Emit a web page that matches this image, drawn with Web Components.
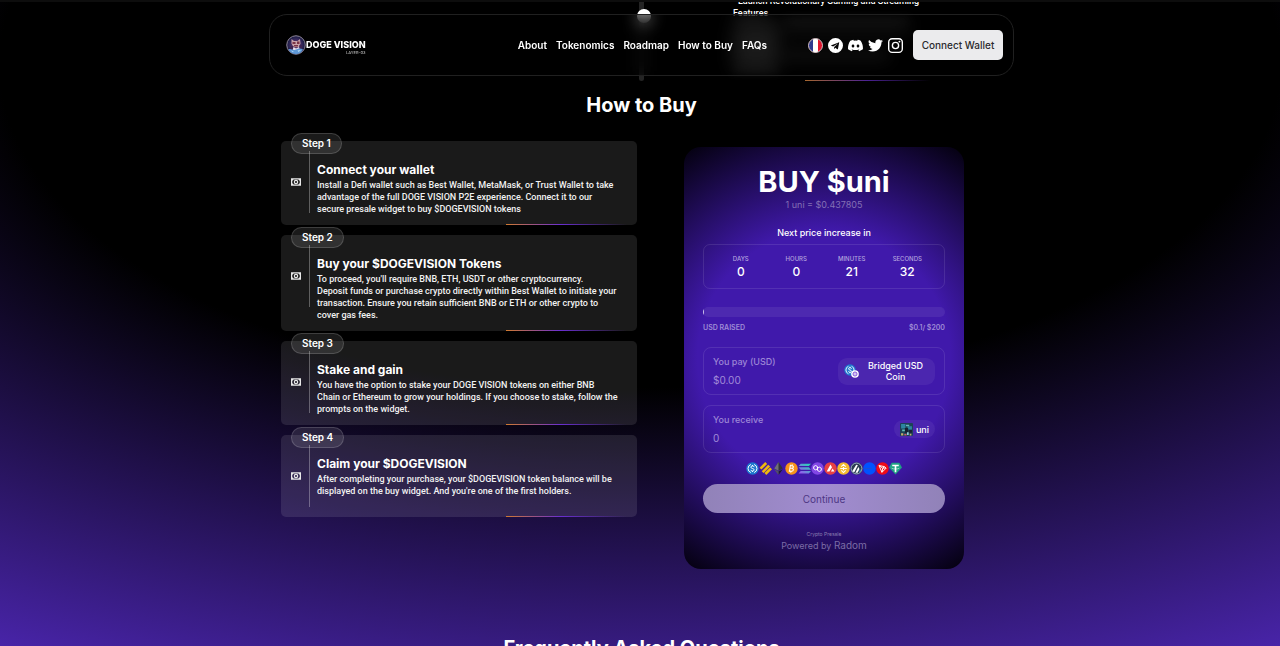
<!DOCTYPE html>
<html lang="en">
<head>
<meta charset="utf-8">
<meta name="viewport" content="width=device-width, initial-scale=1">
<title>Doge Vision – How to Buy</title>
<style>
  html { height: 100%; overflow: hidden; background: #000; }
  body {
    margin: 0; min-height: 100%;
    color: #fff;
    font-family: "Inter", "Liberation Sans", sans-serif;
    font-size: 9px; line-height: 12px;
    background: radial-gradient(125% 125% at 50% 10%, #000 40%, #63e 100%) fixed;
  }
</style>
</head>
<body>
<doge-page></doge-page>

<script>
class Base extends HTMLElement {
  connectedCallback() {
    if (this.shadowRoot) return;
    const t = document.createElement('template');
    t.innerHTML = this.render();
    this.attachShadow({ mode: 'open' }).append(t.content.cloneNode(true));
  }
}
const define = (name, render) =>
  customElements.define(name, class extends Base { render() { return render(this); } });

/* ---------- icons ---------- */
const ICONS = {
  france: ['24', `<clipPath id="c"><circle cx="12" cy="12" r="11"/></clipPath><g clip-path="url(#c)"><path fill="#2f3a8f" d="M0 0h8v24H0z"/><path fill="#fff" d="M8 0h8v24H8z"/><path fill="#e0162f" d="M16 0h8v24h-8z"/></g><circle cx="12" cy="12" r="11.2" fill="none" stroke="#f2d9df" stroke-width="1.4"/>`],
  telegram: ['24', `<path fill="#fff" d="M12 0a12 12 0 1 0 0 24 12 12 0 0 0 0-24zm5.9 7.3-2 10.1c-.1.7-.5.8-1.100.5l-3-2.200-1.500 1.400c-.2.2-.3.3-.6.3l.2-3.100 5.600-5.100c.2-.2 0-.3-.4-.1l-6.900 4.400-3-1c-.6-.2-.6-.6.2-1l11.600-4.500c.5-.2 1 .1.900.3z"/>`],
  discord: ['24', `<path fill="#fff" d="M20.300 4.400a19.800 19.800 0 0 0-4.900-1.500l-.6 1.300a18 18 0 0 0-5.500 0l-.7-1.300c-1.700.3-3.300.8-4.900 1.500C.5 9-.3 13.600.1 18.100a20 20 0 0 0 6 3l1.300-2-2-1 .5-.3a14 14 0 0 0 12.100 0l.5.3-1.900 1 1.200 2a20 20 0 0 0 6-3c.5-5.200-.8-9.700-3.500-13.700zM8 15.300c-1.200 0-2.200-1.100-2.200-2.400S6.800 10.500 8 10.500s2.200 1.100 2.200 2.400-1 2.400-2.200 2.400zm8 0c-1.200 0-2.200-1.100-2.200-2.400s1-2.400 2.200-2.400 2.200 1.100 2.200 2.400-1 2.400-2.200 2.400z"/>`],
  twitter: ['24', `<path fill="#fff" d="M24 4.600a10 10 0 0 1-2.800.8 5 5 0 0 0 2.200-2.700 10 10 0 0 1-3.100 1.200 4.900 4.900 0 0 0-8.400 4.500A14 14 0 0 1 1.700 3.200a4.900 4.900 0 0 0 1.500 6.500 5 5 0 0 1-2.200-.6v.1a4.900 4.900 0 0 0 3.900 4.800 5 5 0 0 1-2.200.1 4.900 4.900 0 0 0 4.600 3.400A9.900 9.900 0 0 1 0 19.500a14 14 0 0 0 7.500 2.200c9.100 0 14-7.500 14-14v-.6A10 10 0 0 0 24 4.600z"/>`],
  instagram: ['24', `<g fill="none" stroke="#fff" stroke-width="2.200"><rect x="1.100" y="1.100" width="21.800" height="21.800" rx="5.500"/><circle cx="12" cy="12" r="5"/></g><circle cx="18.300" cy="5.700" r="1.500" fill="#fff"/>`],
  money: ['24', `<path fill="#e8e8e8" fill-rule="evenodd" d="M0 3h24v18H0zm6 3a4 4 0 0 1-3 3v6a4 4 0 0 1 3 3h12a4 4 0 0 1 3-3V9a4 4 0 0 1-3-3z"/><circle cx="12" cy="12" r="4" fill="none" stroke="#e8e8e8" stroke-width="2.800"/>`],
  usdc: ['24', `<circle cx="12" cy="12" r="11.500" fill="#1d78cf"/><g fill="none" stroke="#fff" stroke-width="1.800"><path d="M9 4.500a8 8 0 0 0 0 15M15 4.500a8 8 0 0 1 0 15M15 9.500c-.3-3-6-3-6 0 0 3.500 6 1.500 6 5 0 3-6 3-6 0M12 5.500v2M12 16.500v2"/></g>`],
  busd: ['24', `<g fill="#f0b90b"><path d="m11.500 0 3.500 3.500L4.500 14 1 10.500z"/><path d="m17 5 3.500 3.500L8.500 20.500 5 17z"/><path d="m20.500 10 3.500 3.500L13.500 24 10 20.500z"/></g>`],
  eth: ['24', `<path fill="#33333b" d="m12 0 8 12-8 4-8-4z"/><path fill="#6f6f7a" d="m12 0v16l-8-4z"/><path fill="#1f1f26" d="m12 24 8-10.500-8 4z"/><path fill="#55555f" d="m12 24v-6.500l-8-4z"/>`],
  btc: ['24', `<circle cx="12" cy="12" r="11.500" fill="#f7931a"/><path fill="none" stroke="#fff" stroke-width="2" d="m10 5-2 13.500M9 6.500l4 .5c4 .5 3 5-1 4.500l-3-.3 3.500.3c4.500.8 3.500 6-1 5.500L7 16.500M13.500 4.500 13 7M11 17l-.5 2.500"/>`],
  sol: ['24', `<linearGradient id="s" x1="0" y1="1" x2="1" y2="0"><stop stop-color="#a44cf5"/><stop offset="1" stop-color="#19e8ae"/></linearGradient><path fill="url(#s)" d="M5 3h19l-4 4.500H1zM1 9.800h19l4 4.500H5zM5 16.500h19L20 21H1z"/>`],
  matic: ['24', `<circle cx="12" cy="12" r="11.500" fill="#8247e5"/><g fill="none" stroke="#fff" stroke-width="1.800"><path d="m8.500 6.500 3.500 2v4l-3.500 2-3.500-2v-4zM15.500 9.500l3.500 2v4l-3.500 2-3.500-2v-4z"/></g>`],
  avax: ['24', `<circle cx="12" cy="12" r="11.500" fill="#e84142"/><path fill="#fff" d="m12 4.500 2.800 5L10 17.500H5zM16 12l3.300 5.500h-6.500z"/>`],
  bnb: ['24', `<circle cx="12" cy="12" r="11.500" fill="#f3ba2f"/><path fill="none" stroke="#fff" stroke-width="2" d="m8 8.500 4-4 4 4M8 15.500l4 4 4-4M6 12h12M12 9v6"/>`],
  arb: ['24', `<circle cx="12" cy="12" r="11.500" fill="#2b3d52"/><circle cx="12" cy="12" r="10" fill="none" stroke="#b5cbe0" stroke-width="1.500"/><path fill="#fff" d="m11.500 5 3 1L8 19l-4-2zM15.500 9l2 4-3.500 7h-4z"/><path fill="#28a0f0" d="m18.500 13 1.500 3-3 3z"/>`],
  base: ['24', `<circle cx="12" cy="12" r="11.500" fill="#0052ff"/><path d="M2 12h14" stroke="#1a50d8" stroke-width="2"/>`],
  tron: ['24', `<circle cx="12" cy="12" r="11.500" fill="#f00b17"/><path fill="none" stroke="#fff" stroke-width="1.800" stroke-linejoin="round" d="m5.500 6.500 10 2 3 3-7.500 7.500zM5.500 6.500l7 5 6-.5M12.500 11.500 11 19M15.500 8.500l-3 3"/>`],
  usdt: ['24', `<path fill="#1fa284" d="M5 1.500h14l5 8.500L12 23 0 10z"/><path fill="#fff" d="M6 5h12v3h-4.500v11h-3V8H6z"/><path fill="none" stroke="#fff" d="M5 11.500c3 2 11 2 14 0"/>`],
  polygon: ['24', `<circle cx="12" cy="12" r="11.500" fill="#fff"/><circle cx="12" cy="12" r="6" fill="none" stroke="#7c4ad8" stroke-width="3"/><path d="M9 12h6" stroke="#7c4ad8" stroke-width="2"/>`],
  uni: ['24', `<rect width="24" height="24" rx="2" fill="#1c4256"/><path fill="#2d86a0" d="M2 2h8v8H2zM14 6h8v6h-8z"/><path fill="#63bdb7" d="M11 3h6v3h-6zM4 12h7v3H4z"/><path fill="#16202f" d="M9 9h6v9H9zM17 13h5v5h-5z"/><path fill="#c5ae6e" d="M2 19h4v4H2zM18 20h3v3h-3z"/><path fill="#cf6170" d="M8 20h4v3H8z"/><path fill="#98d3e2" d="M13 17h3v5h-3z"/>`],
  mascot: ['40', `<radialGradient id="g"><stop stop-color="#7a4568"/><stop offset=".6" stop-color="#3a2a60"/><stop offset="1" stop-color="#171b3f"/></radialGradient><circle cx="20" cy="20" r="18.500" fill="url(#g)" stroke="#8f8599" stroke-width="2"/><path fill="#c9a2a8" d="m11 8 5 4h7l5-4 1 9-3 7H15l-4-7z"/><path fill="#7a3547" d="M13 14h6v4h-6zM22 13h5v5h-5zM16 20h8v3h-8z"/><path fill="#3e2450" d="M9 22h6v6H9zM27 20h5v7h-5z"/><path fill="#e8e2ee" d="m15 24 5 3 6-3 2 7H13z"/><path fill="#5e98d6" d="M5 29c5-3 9 3 15 0s10-2 14 0c-3 6-8 9-14 9S8 35 5 29z"/><path fill="#b8ddf5" d="m10 31 6 2-3 1zM23 31l7-1-5 4z"/>`]
};
define('x-icon', el => {
  const [box, body] = ICONS[el.getAttribute('name')];
  return `<style>:host{display:block;flex:none;width:var(--size,13px);height:var(--size,13px)}svg{display:block;width:100%;height:100%}</style>
  <svg viewBox="0 0 ${box} ${box}" aria-hidden="true">${body}</svg>`;
});

/* ---------- header ---------- */
define('site-header', () => `<style>
  :host { display: flex; align-items: center; box-sizing: border-box; height: 62px; padding: 0 10px 0 16px;
    border: 1px solid #202020; border-radius: 18px; background: rgba(0,0,0,.4); backdrop-filter: blur(8px); }
  .logo { display: flex; align-items: center; color: #fff; text-decoration: none; --size: 20px; }
  .name { position: relative; font-size: 9px; font-weight: 800; white-space: nowrap; }
  .name small { position: absolute; right: 0; top: 11px; font-size: 4px; line-height: 6px; font-weight: 500; color: #b5b5b5; }
  nav { display: flex; gap: 9px; margin-left: auto; font-size: 10px; font-weight: 600; white-space: nowrap; }
  nav a { color: #fff; text-decoration: none; }
  .social { display: flex; gap: 5px; margin: 0 10px 0 41px; --size: 15px; }
  button { width: 90px; height: 30px; padding: 0; border: 0; border-radius: 5px; background: #ebebed; color: #2a2a2e;
    font: 500 10px/12px "Inter", sans-serif; white-space: nowrap; }
</style>
<a class="logo" href="#"><x-icon name="mascot"></x-icon><span class="name">DOGE VISION<small>LAYER-03</small></span></a>
<nav><a href="#about">About</a><a href="#tokenomics">Tokenomics</a><a href="#roadmap">Roadmap</a><a href="#buy">How to Buy</a><a href="#faqs">FAQs</a></nav>
<div class="social">
  <a href="#fr" aria-label="Français"><x-icon name="france"></x-icon></a>
  <a href="#tg" aria-label="Telegram"><x-icon name="telegram"></x-icon></a>
  <a href="#dc" aria-label="Discord"><x-icon name="discord"></x-icon></a>
  <a href="#tw" aria-label="Twitter"><x-icon name="twitter"></x-icon></a>
  <a href="#ig" aria-label="Instagram"><x-icon name="instagram"></x-icon></a>
</div>
<button type="button">Connect Wallet</button>`);

/* ---------- end of the roadmap, scrolled under the header ---------- */
define('roadmap-end', () => `<style>
  :host { display: grid; grid-template-columns: 1fr 5px 1fr; height: 81px; position: relative; overflow: hidden; }
  .track { grid-column: 2; background: #242424; border-radius: 0 0 3px 3px; }
  .dot { position: absolute; left: calc(50% - 5px); top: 9px; width: 14px; height: 14px; border-radius: 50%; background: #fff; }
  .item { position: relative; padding-left: 89px; }
  p { margin: -5px 0 0; width: 200px; text-indent: 5px; font-family: Roboto, sans-serif; font-weight: 500; }
  .chip { width: 46px; height: 48px; margin-top: 4px; background: #2c2c2c; filter: blur(4px); }
  .row { position: absolute; left: 140px; top: 20px; width: 125px; height: 10px; background: #2c2c2c; filter: blur(4px); }
  .row.b { top: 50px; width: 105px; background: #242424; }
  .glow { position: absolute; left: 161px; bottom: 0; width: 125px; height: 1px; background: linear-gradient(90deg, #a5662f, #4b2293 50%, transparent); }
</style>
<div class="track"></div><div class="dot"></div>
<div class="item"><p>Launch Revolutionary Gaming and Streaming Features</p><div class="chip"></div><div class="row"></div><div class="row b"></div><div class="glow"></div></div>`);

/* ---------- step card ---------- */
define('step-card', el => `<style>
  :host { display: flex; position: relative; box-sizing: border-box; min-height: 82px; padding: 0 10px; border-radius: 5px; background: rgba(255,255,255,.1); }
  .rail { display: flex; align-items: center; box-sizing: border-box; width: 19px; height: 62px; margin: 10px 7px 0 0; border-right: 1px solid rgba(255,255,255,.3); --size: 10px; }
  .badge { position: absolute; left: 10px; top: -8px; box-sizing: border-box; height: 21px; padding: 0 10px; border: 1px solid rgba(255,255,255,.16);
    border-radius: 11px; background: rgba(255,255,255,.1); font-size: 10px; line-height: 19px; font-weight: 600; }
  .text { flex: 1; padding: 21px 0 10px; }
  h3 { margin: 0 0 2px; font-size: 12px; line-height: 15px; font-weight: 700; }
  p { margin: 0; color: #f2f2f2; font-family: Roboto, sans-serif; font-weight: 500; }
  .glow { position: absolute; right: 10px; bottom: 0; width: 34%; height: 1px; background: linear-gradient(90deg, #d07a30, #6a2fd0 45%, transparent); }
</style>
<span class="badge">${el.getAttribute('step')}</span>
<div class="rail"><x-icon name="money"></x-icon></div>
<div class="text"><h3>${el.getAttribute('heading')}</h3><p><slot></slot></p></div>
<div class="glow"></div>`);

/* ---------- presale widget ---------- */
define('time-unit', el => `<style>
  :host { display: block; text-align: center; font-size: 12px; line-height: 16px; font-weight: 500; }
  small { display: block; font-size: 6px; line-height: 10px; color: #b3a3de; }
</style><small>${el.getAttribute('label')}</small><slot></slot>`);

define('amount-field', el => `<style>
  :host { display: flex; align-items: center; justify-content: space-between; box-sizing: border-box; height: 48px; padding: 0 9px; border: 1px solid rgba(255,255,255,.1); border-radius: 8px; }
  label { display: block; font-size: 9px; line-height: 14px; font-weight: 500; color: #9c86d6; white-space: nowrap; }
  input { display: block; width: 90px; height: 16px; margin-top: 3px; padding: 0; border: 0; outline: 0; background: none; color: #a08bd8; font: 10px/16px "Inter", sans-serif; }
</style>
<div><label for="amount">${el.getAttribute('label')}</label><input id="amount" value="${el.getAttribute('value')}" inputmode="decimal"></div><slot></slot>`);

define('coin-button', () => `<style>
  :host { display: block; }
  button { display: flex; align-items: center; gap: 3px; padding: 1px 6px; min-height: 18px; border: 0; border-radius: 9px; background: rgba(255,255,255,.06); color: #fff; font: 500 9px/11px "Inter", sans-serif; }
  :host([wide]) button { width: 97px; height: 27px; }
  .label { flex: 1; text-align: center; }
</style><button type="button"><slot name="icon"></slot><span class="label"><slot></slot></span></button>`);

define('coin-pair', () => `<style>
  :host { display: block; position: relative; width: 15px; height: 14px; --size: 12px; }
  .net { position: absolute; left: 7px; top: 6px; --size: 8px; }
</style><x-icon name="usdc"></x-icon><x-icon class="net" name="polygon"></x-icon>`);

define('presale-widget', () => `<style>
  :host { display: flex; flex-direction: column; box-sizing: border-box; padding: 17px 19px 16px; border-radius: 17px; text-align: center;
    background: radial-gradient(circle, #4019ab 50%, #03000c 100%); }
  h2 { margin: 0; font-size: 29px; line-height: 36px; font-weight: 700; }
  .rate { margin: 0; font-size: 9px; line-height: 10px; color: #8370b5; }
  .next { margin: 17px 0 5px; font-size: 9px; line-height: 12px; font-weight: 500; }
  .timer { display: grid; grid-template-columns: repeat(4, 1fr); box-sizing: border-box; height: 45px; padding: 9px 9px 0; border: 1px solid rgba(255,255,255,.1); border-radius: 7px; }
  .bar { height: 10px; margin-top: 18px; border-radius: 5px; background: rgba(255,255,255,.07); overflow: hidden; }
  .bar i { display: block; width: 1px; height: 100%; background: #cfc5ec; }
  .raised { display: flex; justify-content: space-between; margin: 6px 0 14px; font-size: 7px; line-height: 10px; font-weight: 600; color: #9f8bd6; }
  amount-field { margin-bottom: 10px; text-align: left; }
  .coins { display: flex; justify-content: center; margin: -1px 0 9px; }
  .go { height: 29px; padding: 0; border: 0; border-radius: 15px; background: linear-gradient(90deg, #9182b8, #a18cd0 50%, #9182b8); color: #4d3684; font: 10px/12px "Inter", sans-serif; }
  .tag { margin: 17px 0 0; font-size: 5px; line-height: 8px; color: #8b7db0; }
  .by { margin: 0; font-size: 9px; line-height: 14px; color: #7b6ca6; }
  .by a { color: inherit; text-decoration: none; font-size: 10px; }
</style>
<h2>BUY $uni</h2>
<p class="rate">1 uni = $0.437805</p>
<p class="next">Next price increase in</p>
<div class="timer"><time-unit label="DAYS">0</time-unit><time-unit label="HOURS">0</time-unit><time-unit label="MINUTES">21</time-unit><time-unit label="SECONDS">32</time-unit></div>
<div class="bar"><i></i></div>
<div class="raised"><span>USD RAISED</span><span>$0.1/ $200</span></div>
<amount-field label="You pay (USD)" value="$0.00"><coin-button wide><coin-pair slot="icon"></coin-pair>Bridged USD Coin</coin-button></amount-field>
<amount-field label="You receive" value="0"><coin-button><x-icon slot="icon" name="uni"></x-icon>uni</coin-button></amount-field>
<div class="coins">${['usdc','busd','eth','btc','sol','matic','avax','bnb','arb','base','tron','usdt'].map(n => `<x-icon name="${n}"></x-icon>`).join('')}</div>
<button class="go" type="button">Continue</button>
<p class="tag">Crypto Presale</p>
<p class="by">Powered by <a href="#radom">Radom</a></p>`);

/* ---------- page ---------- */
define('doge-page', () => `<style>
  :host { display: block; padding-left: 3px; }
  .wrap { max-width: 745px; margin: 0 auto; }
  .top { position: fixed; z-index: 2; left: 3px; right: 0; top: 14px; }
  .edge { position: fixed; z-index: 3; inset: 0 0 auto; height: 2px; background: #0d0d0d; }
  h2 { margin: 0; text-align: center; font-size: 20px; line-height: 24px; font-weight: 700; }
  .how { margin-top: 12px; }
  .cols { display: grid; grid-template-columns: 1fr 1fr; gap: 9px; align-items: start; padding: 24px 12px 0; }
  .steps { display: grid; gap: 10px; }
  presale-widget { width: 280px; margin: 6px auto 0; }
  .faq { margin-top: 67px; }
</style>
<div class="edge"></div>
<div class="top"><site-header class="wrap"></site-header></div>
<roadmap-end class="wrap"></roadmap-end>
<main class="wrap">
  <h2 class="how" id="buy">How to Buy</h2>
  <div class="cols">
    <div class="steps">
      <step-card step="Step 1" heading="Connect your wallet">Install a Defi wallet such as Best Wallet, MetaMask, or Trust Wallet to take<br>advantage of the full DOGE VISION P2E experience. Connect it to our<br>secure presale widget to buy $DOGEVISION tokens</step-card>
      <step-card step="Step 2" heading="Buy your $DOGEVISION Tokens">To proceed, you'll require BNB, ETH, USDT or other cryptocurrency.<br>Deposit funds or purchase crypto directly within Best Wallet to initiate your<br>transaction. Ensure you retain sufficient BNB or ETH or other crypto to<br>cover gas fees.</step-card>
      <step-card step="Step 3" heading="Stake and gain">You have the option to stake your DOGE VISION tokens on either BNB<br>Chain or Ethereum to grow your holdings. If you choose to stake, follow the<br>prompts on the widget.</step-card>
      <step-card step="Step 4" heading="Claim your $DOGEVISION">After completing your purchase, your $DOGEVISION token balance will be<br>displayed on the buy widget. And you're one of the first holders.</step-card>
    </div>
    <presale-widget></presale-widget>
  </div>
  <h2 class="faq" id="faqs">Frequently Asked Questions</h2>
</main>`);
</script>
</body>
</html>
